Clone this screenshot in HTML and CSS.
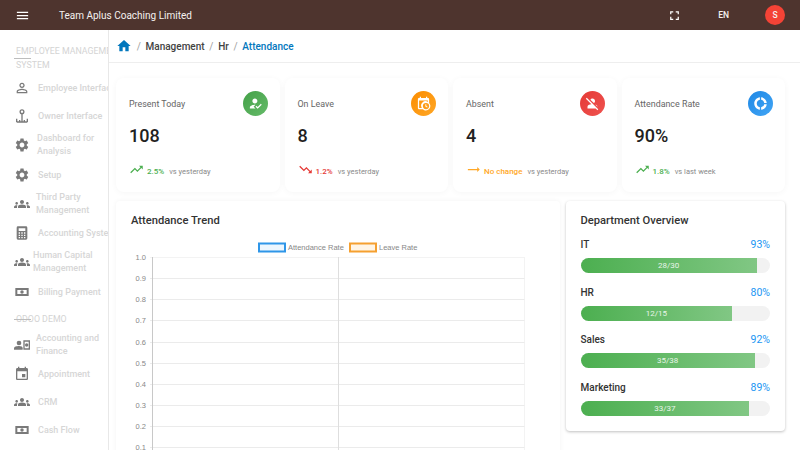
FILE: index.html
```html
<!DOCTYPE html>
<html lang="en">
<head>
  <meta charset="UTF-8">
  <meta name="viewport" content="width=device-width, initial-scale=1.0">
  <title>Attendance</title>
  <link rel="stylesheet" href="styles.css">
</head>
<body>
  <svg class="defs" width="0" height="0">
    <symbol id="i-gear" viewBox="0 0 24 24"><path d="M19.14 12.94c.04-.3.06-.61.06-.94 0-.32-.02-.64-.07-.94l2.03-1.58c.18-.14.23-.41.12-.61l-1.92-3.32c-.12-.22-.37-.29-.59-.22l-2.39.96c-.5-.38-1.03-.7-1.62-.94l-.36-2.54c-.04-.24-.24-.41-.48-.41h-3.84c-.24 0-.43.17-.47.41l-.36 2.54c-.59.24-1.13.57-1.62.94l-2.39-.96c-.22-.08-.47 0-.59.22L2.74 8.87c-.12.21-.08.47.12.61l2.03 1.58c-.05.3-.09.63-.09.94s.02.64.07.94l-2.03 1.58c-.18.14-.23.41-.12.61l1.92 3.32c.12.22.37.29.59.22l2.39-.96c.5.38 1.03.7 1.62.94l.36 2.54c.05.24.24.41.48.41h3.84c.24 0 .44-.17.47-.41l.36-2.54c.59-.24 1.13-.56 1.62-.94l2.39.96c.22.08.47 0 .59-.22l1.92-3.32c.12-.22.07-.47-.12-.61l-2.01-1.58zM12 15.6c-1.98 0-3.6-1.62-3.6-3.6s1.62-3.6 3.6-3.6 3.6 1.62 3.6 3.6-1.62 3.6-3.6 3.6z"/></symbol>
    <symbol id="i-groups" viewBox="0 0 24 24"><path d="M4 13c1.1 0 2-.9 2-2s-.9-2-2-2-2 .9-2 2 .9 2 2 2zm1.13 1.1c-.37-.06-.74-.1-1.13-.1-.99 0-1.93.21-2.78.58C.48 14.9 0 15.62 0 16.43V18h4.5v-1.61c0-.83.23-1.61.63-2.29zM20 13c1.1 0 2-.9 2-2s-.9-2-2-2-2 .9-2 2 .9 2 2 2zm4 3.43c0-.81-.48-1.53-1.22-1.85-.85-.37-1.79-.58-2.78-.58-.39 0-.76.04-1.13.1.4.68.63 1.46.63 2.29V18H24v-1.57zm-7.76-2.78c-1.17-.52-2.61-.9-4.24-.9-1.63 0-3.07.39-4.24.9C6.68 14.13 6 15.21 6 16.39V18h12v-1.61c0-1.18-.68-2.26-1.76-2.74zM12 12c1.66 0 3-1.34 3-3s-1.34-3-3-3-3 1.34-3 3 1.34 3 3 3z"/></symbol>
    <symbol id="i-money" viewBox="0 0 24 24"><path fill-rule="evenodd" d="M2 6h20v12H2zM5 9v6h14V9z"/><circle cx="12" cy="12" r="2.6"/></symbol>
    <symbol id="i-up" viewBox="0 0 24 24"><path d="M16 6l2.29 2.29-4.88 4.88-4-4L2 16.59 3.41 18l6-6 4 4 6.3-6.29L22 12V6z"/></symbol>
  </svg>

  <header class="topbar">
    <svg class="menu-icon" viewBox="0 0 24 24"><path d="M3 18h18v-2H3v2zm0-5h18v-2H3v2zm0-7v2h18V6H3z"/></svg>
    <span class="brand">Team Aplus Coaching Limited</span>
    <svg class="full-icon" viewBox="0 0 24 24"><path d="M7 14H5v5h5v-2H7v-3zm-2-4h2V7h3V5H5v5zm12 7h-3v2h5v-5h-2v3zM14 5v2h3v3h2V5h-5z"/></svg>
    <span class="lang">EN</span>
    <span class="avatar">S</span>
  </header>

  <div class="layout">
    <nav class="sidebar">
      <div class="section first">EMPLOYEE MANAGEMENT SYSTEM</div>
      <a class="item"><svg viewBox="0 0 24 24"><path d="M12 5.9c1.16 0 2.1.94 2.1 2.1s-.94 2.1-2.1 2.1S9.9 9.16 9.9 8s.94-2.1 2.1-2.1m0 9c2.97 0 6.1 1.46 6.1 2.1v1.1H5.9V17c0-.64 3.13-2.1 6.1-2.1M12 4C9.79 4 8 5.79 8 8s1.79 4 4 4 4-1.79 4-4-1.79-4-4-4zm0 9c-2.67 0-8 1.34-8 4v3h16v-3c0-2.66-5.33-4-8-4z"/></svg><span>Employee Interface</span></a>
      <a class="item"><svg viewBox="0 0 24 24"><path class="line" d="M12 8v12M4 21h16M4 21v-5M20 21v-5M8.500 21v-3M15.500 21v-3"/><circle class="line" cx="12" cy="5.500" r="2.800"/></svg><span>Owner Interface</span></a>
      <a class="item two"><svg viewBox="0 0 24 24"><use href="#i-gear"/></svg><span>Dashboard for Analysis</span></a>
      <a class="item"><svg viewBox="0 0 24 24"><use href="#i-gear"/></svg><span>Setup</span></a>
      <a class="item two mid"><svg viewBox="0 0 24 24"><use href="#i-groups"/></svg><span>Third Party Management</span></a>
      <a class="item"><svg viewBox="0 0 24 24"><path fill-rule="evenodd" d="M6 2h12a2 2 0 0 1 2 2v16a2 2 0 0 1-2 2H6a2 2 0 0 1-2-2V4a2 2 0 0 1 2-2zm1 3v4h10V5zm0 6v2h2v-2zm4 0v2h2v-2zm4 0v2h2v-2zm-8 3.500v2h2v-2zm4 0v2h2v-2zm4 0v2h2v-2zm-8 3.500v2h2v-2zm4 0v2h2v-2zm4 0v2h2v-2z"/></svg><span>Accounting System</span></a>
      <a class="item two tight"><svg viewBox="0 0 24 24"><use href="#i-groups"/></svg><span>Human Capital Management</span></a>
      <a class="item"><svg viewBox="0 0 24 24"><use href="#i-money"/></svg><span>Billing Payment</span></a>
      <div class="section">ODOO DEMO</div>
      <a class="item two mid"><svg viewBox="0 0 24 24"><circle cx="7.500" cy="9" r="3.500"/><path d="M0 19v-2c0-2.500 4-3.500 7.500-3.500s5.500 1 5.500 3.500v2z"/><path fill-rule="evenodd" d="M14 5h10v14H14zm2 2v10h6V7zm3 2.500a2.500 2.500 0 1 1 0 5 2.500 2.500 0 0 1 0-5z"/></svg><span>Accounting and Finance</span></a>
      <a class="item"><svg viewBox="0 0 24 24"><path d="M17 12h-5v5h5v-5zM16 1v2H8V1H6v2H5c-1.110 0-1.990.9-1.990 2L3 19c0 1.100.89 2 2 2h14c1.100 0 2-.9 2-2V5c0-1.100-.9-2-2-2h-1V1h-2zm3 18H5V8h14v11z"/></svg><span>Appointment</span></a>
      <a class="item"><svg viewBox="0 0 24 24"><use href="#i-groups"/></svg><span>CRM</span></a>
      <a class="item"><svg viewBox="0 0 24 24"><use href="#i-money"/></svg><span>Cash Flow</span></a>
    </nav>

    <main class="main">
      <div class="crumbs">
        <svg class="home" viewBox="0 0 24 24"><path d="M10 20v-6h4v6h5v-8h3L12 3 2 12h3v8z"/></svg>
        <i>/</i><span>Management</span><i>/</i><span>Hr</span><i>/</i><span class="current">Attendance</span>
      </div>

      <div class="content">
        <section class="stats">
          <div class="stat">
            <div class="stat-top">
              <span class="label">Present Today</span>
              <span class="badge green"><svg viewBox="0 0 24 24"><path d="M9 17l3-2.940c-.39-.04-.68-.06-1-.06-2.670 0-8 1.340-8 4v2h9l-3-3zm2-5c2.210 0 4-1.790 4-4s-1.790-4-4-4-4 1.790-4 4 1.790 4 4 4m4.470 8.500L12 17l1.400-1.410 2.070 2.080 5.130-5.170 1.400 1.410z"/></svg></span>
            </div>
            <div class="value">108</div>
            <div class="trend"><svg class="c-green" viewBox="0 0 24 24"><use href="#i-up"/></svg><b class="c-green">2.5%</b><span>vs yesterday</span></div>
          </div>
          <div class="stat">
            <div class="stat-top">
              <span class="label">On Leave</span>
              <span class="badge orange"><svg viewBox="0 0 24 24"><path fill-rule="evenodd" d="M21 11.110V5c0-1.100-.9-2-2-2h-1V1h-2v2H8V1H6v2H5c-1.110 0-1.990.9-1.990 2L3 19c0 1.100.89 2 2 2h6.110c1.260 1.240 2.980 2 4.890 2 3.870 0 7-3.130 7-7 0-1.910-.76-3.630-2-4.890zM5 7h14v2.400A7 7 0 0 0 9.300 19H5zm11 14a5 5 0 1 1 0-10 5 5 0 0 1 0 10zm.5-8h-1.500v3.600l2.800 1.700.75-1.200-2.050-1.250z"/></svg></span>
            </div>
            <div class="value">8</div>
            <div class="trend"><svg class="c-red" viewBox="0 0 24 24"><path d="M16 18l2.290-2.290-4.880-4.880-4 4L2 7.410 3.410 6l6 6 4-4 6.300 6.290L22 12v6z"/></svg><b class="c-red">1.2%</b><span>vs yesterday</span></div>
          </div>
          <div class="stat">
            <div class="stat-top">
              <span class="label">Absent</span>
              <span class="badge red"><svg viewBox="0 0 24 24"><path d="M8.650 5.820C9.360 4.720 10.600 4 12 4c2.210 0 4 1.790 4 4 0 1.400-.72 2.640-1.820 3.350L8.650 5.820zM20 17.170c-.02-1.100-.63-2.110-1.610-2.620-.54-.28-1.130-.54-1.770-.76L20 17.170zm1.190 4.020L2.810 2.810 1.390 4.220l8.890 8.890c-1.810.23-3.390.79-4.670 1.450C4.610 15.070 4 16.100 4 17.220V20h13.170l2.610 2.610 1.410-1.420z"/></svg></span>
            </div>
            <div class="value">4</div>
            <div class="trend"><svg class="c-orange" viewBox="0 0 24 24"><path d="M22 12l-4-4v3H3v2h15v3z"/></svg><b class="c-orange">No change</b><span>vs yesterday</span></div>
          </div>
          <div class="stat">
            <div class="stat-top">
              <span class="label">Attendance Rate</span>
              <span class="badge blue"><svg viewBox="0 0 24 24"><path d="M11 6.100V2c-5 .5-9 4.800-9 10s4 9.500 9 10v-4.100c-3-.5-5-3-5-5.900s2-5.400 5-5.900zM17.900 11H22c-.47-5-4-8.530-9-9v4.100c2.500.4 4.500 2.400 4.900 4.900zM13 17.900V22c5-.47 8.530-4 9-9h-4.100c-.4 2.500-2.400 4.500-4.900 4.900z"/></svg></span>
            </div>
            <div class="value">90%</div>
            <div class="trend"><svg class="c-green" viewBox="0 0 24 24"><use href="#i-up"/></svg><b class="c-green">1.8%</b><span>vs last week</span></div>
          </div>
        </section>

        <section class="panels">
          <div class="panel chart-panel">
            <h2>Attendance Trend</h2>
            <svg class="chart" width="414" height="240" viewBox="0 0 414 240">
              <g class="legend">
                <rect class="leg-blue" x="128" y="3.500" width="26" height="8"/>
                <text x="157" y="10">Attendance Rate</text>
                <rect class="leg-orange" x="219" y="3.500" width="26" height="8"/>
                <text x="248" y="10">Leave Rate</text>
              </g>
              <g class="grid">
                <path class="edge" d="M19 17.500H393.500M393.500 17V240"/>
                <path d="M19 38.500H393.500M19 59.500H393.500M19 80.500H393.500M19 102.500H393.500M19 123.500H393.500M19 144.500H393.500M19 165.500H393.500M19 186.500H393.500M19 207.500H393.500"/>
                <path class="mid-line" d="M207.500 17V240"/>
              </g>
              <path class="axis" d="M21.500 17V240"/>
              <g class="ticks">
                <text x="15" y="20">1.0</text>
                <text x="15" y="41">0.9</text>
                <text x="15" y="62">0.8</text>
                <text x="15" y="83">0.7</text>
                <text x="15" y="105">0.6</text>
                <text x="15" y="126">0.5</text>
                <text x="15" y="147">0.4</text>
                <text x="15" y="168">0.3</text>
                <text x="15" y="189">0.2</text>
                <text x="15" y="210">0.1</text>
              </g>
            </svg>
          </div>

          <div class="panel dept-panel">
            <h2>Department Overview</h2>
            <div class="dept">
              <div class="dept-head"><span>IT</span><b>93%</b></div>
              <div class="track"><div class="fill" style="width:93%">28/30</div></div>
            </div>
            <div class="dept">
              <div class="dept-head"><span>HR</span><b>80%</b></div>
              <div class="track"><div class="fill" style="width:80%">12/15</div></div>
            </div>
            <div class="dept">
              <div class="dept-head"><span>Sales</span><b>92%</b></div>
              <div class="track"><div class="fill" style="width:92%">35/38</div></div>
            </div>
            <div class="dept">
              <div class="dept-head"><span>Marketing</span><b>89%</b></div>
              <div class="track"><div class="fill" style="width:89%">33/37</div></div>
            </div>
          </div>
        </section>
      </div>
    </main>
  </div>
</body>
</html>
```

FILE: styles.css
```css
html, body {
  height: 100%;
  margin: 0;
  overflow: hidden;
}
body {
  font-family: Roboto, "Liberation Sans", sans-serif;
  background-color: #fff;
  color: #212121;
}
.defs {
  display: none;
}

/* top bar */
.topbar {
  height: 30px;
  display: flex;
  align-items: center;
  background-color: #4e342e;
  color: #f5f1ef;
  padding: 0 15px;
}
.menu-icon {
  width: 15px;
  height: 15px;
  fill: #fff;
}
.brand {
  margin-left: 29px;
  font-size: 10px;
  flex: 1;
}
.full-icon {
  width: 15px;
  height: 15px;
  fill: #fff;
}
.lang {
  margin-left: 36px;
  margin-right: 36px;
  font-size: 8.500px;
  font-weight: 500;
}
.avatar {
  width: 20px;
  height: 20px;
  border-radius: 50%;
  background-color: #f44336;
  font-size: 8.500px;
  font-weight: 500;
  display: flex;
  align-items: center;
  justify-content: center;
}

.layout {
  display: flex;
  height: 420px;
}

/* side menu */
.sidebar {
  width: 108px;
  flex-shrink: 0;
  border-right: 1px solid #e8e8e8;
  overflow: hidden;
  padding-top: 14px;
}
.section {
  position: relative;
  padding-left: 16px;
  font-size: 8.800px;
  line-height: 14px;
  color: #d4d4d4;
  white-space: nowrap;
  height: 15px;
  margin: 6px 0 3px;
}
.section.first {
  white-space: normal;
  width: 130px;
  height: 30px;
  margin: 0;
}
.section::before {
  content: "";
  position: absolute;
  left: 14px;
  top: 7px;
  width: 17px;
  height: 1px;
  background-color: #bdbdbd;
}
.section.first::before {
  top: 14px;
}
.item {
  display: flex;
  align-items: center;
  gap: 8px;
  height: 28px;
  padding-left: 14px;
  font-size: 9px;
  font-weight: 500;
  color: #d6d6d6;
  white-space: nowrap;
}
.item svg {
  width: 16px;
  height: 16px;
  flex-shrink: 0;
  fill: #7a7a7a;
}
.item .line {
  fill: none;
  stroke: #7a7a7a;
  stroke-width: 2;
}
.item.two {
  height: 30.500px;
  gap: 7px;
  white-space: normal;
  line-height: 13px;
}
.item.two span {
  width: 68px;
}
.item.two.mid {
  gap: 6px;
}
.item.two.tight {
  gap: 3px;
}

/* main */
.main {
  flex: 1;
  min-width: 0;
  overflow: hidden;
}
.crumbs {
  height: 32px;
  display: flex;
  align-items: center;
  padding-left: 7px;
  border-bottom: 1px solid #eee;
  font-size: 10px;
  font-weight: 500;
  color: #424242;
}
.crumbs i {
  font-style: normal;
  font-weight: 400;
  color: #9e9e9e;
  margin: 0 4.700px;
}
.home {
  width: 16px;
  height: 16px;
  fill: #0277bd;
}
.current {
  color: #0277bd;
}
.content {
  padding: 15px 15px 0 7px;
}

/* stat cards */
.stats {
  display: grid;
  grid-template-columns: repeat(4, 1fr);
  gap: 5px;
}
.stat {
  height: 114px;
  box-sizing: border-box;
  padding: 13px 12px 0 13px;
  background-color: #fff;
  border-radius: 8px;
  box-shadow: 0 1px 6px rgba(0, 0, 0, 0.04);
}
.stat-top {
  display: flex;
  justify-content: space-between;
  align-items: center;
}
.label {
  font-size: 8.900px;
  color: #666;
}
.badge {
  width: 25px;
  height: 25px;
  border-radius: 50%;
  display: flex;
  align-items: center;
  justify-content: center;
}
.badge svg {
  width: 15px;
  height: 15px;
  fill: #fff;
}
.green { background: linear-gradient(135deg, #43a047, #66bb6a); }
.orange { background: linear-gradient(135deg, #fb8c00, #ffa726); }
.red { background: linear-gradient(135deg, #e53935, #ef5350); }
.blue { background: linear-gradient(135deg, #1e88e5, #42a5f5); }
.value {
  margin-top: 8px;
  font-size: 18px;
  line-height: 24px;
  font-weight: 500;
}
.trend {
  display: flex;
  align-items: center;
  margin-top: 17px;
  font-size: 7.500px;
  color: #8a8a8a;
}
.trend svg {
  width: 15px;
  height: 15px;
  margin-right: 3px;
  margin-top: -3px;
}
.trend b {
  font-size: 8px;
  font-weight: 500;
  margin-right: 5px;
}
.c-green { color: #4caf50; fill: #4caf50; }
.c-red { color: #e53935; fill: #e53935; }
.c-orange { color: #ffa726; fill: #ffa726; }

/* panels */
.panels {
  display: grid;
  grid-template-columns: 444px 219.500px;
  justify-content: space-between;
  align-items: start;
  margin-top: 9px;
}
.panel {
  background-color: #fff;
  border-radius: 4px;
  box-sizing: border-box;
  padding: 12px 15px 0;
}
.panel h2 {
  margin: 0;
  font-size: 11.200px;
  line-height: 16px;
  font-weight: 500;
  color: #333;
}
.chart-panel {
  height: 300px;
  box-shadow: 0 0 5px rgba(0, 0, 0, 0.05);
}
.chart {
  display: block;
  margin-top: 11px;
}
.legend text, .ticks text {
  font-family: "Liberation Sans", sans-serif;
  font-size: 7.500px;
  fill: #888;
}
.ticks text {
  text-anchor: end;
}
.leg-blue {
  fill: #ecf6fe;
  stroke: #2f96e8;
  stroke-width: 2;
}
.leg-orange {
  fill: #fff5e6;
  stroke: #f5a030;
  stroke-width: 2;
}
.grid path {
  fill: none;
  stroke: #ebebeb;
  stroke-width: 1;
}
.grid .edge {
  stroke: #f3f3f3;
}
.grid .mid-line {
  stroke: #dedede;
}
.axis {
  fill: none;
  stroke: #c8c8c8;
  stroke-width: 1;
}
.dept-panel {
  height: 230px;
  box-shadow: 0 1px 3px rgba(0, 0, 0, 0.25);
}
.dept-panel h2 {
  padding-bottom: 1px;
}
.dept {
  margin-top: 8px;
  height: 39.500px;
}
.dept-head {
  display: flex;
  justify-content: space-between;
  font-size: 10px;
  line-height: 14px;
  font-weight: 500;
  color: #333;
}
.dept-head b {
  font-size: 10.500px;
  font-weight: 400;
  color: #2196f3;
}
.track {
  height: 15px;
  margin-top: 6px;
  border-radius: 8px;
  background-color: #f2f2f2;
  overflow: hidden;
}
.fill {
  height: 15px;
  line-height: 15px;
  text-align: center;
  font-size: 8px;
  color: #e8f5e9;
  background: linear-gradient(90deg, #4caf50, #81c784);
}
```
